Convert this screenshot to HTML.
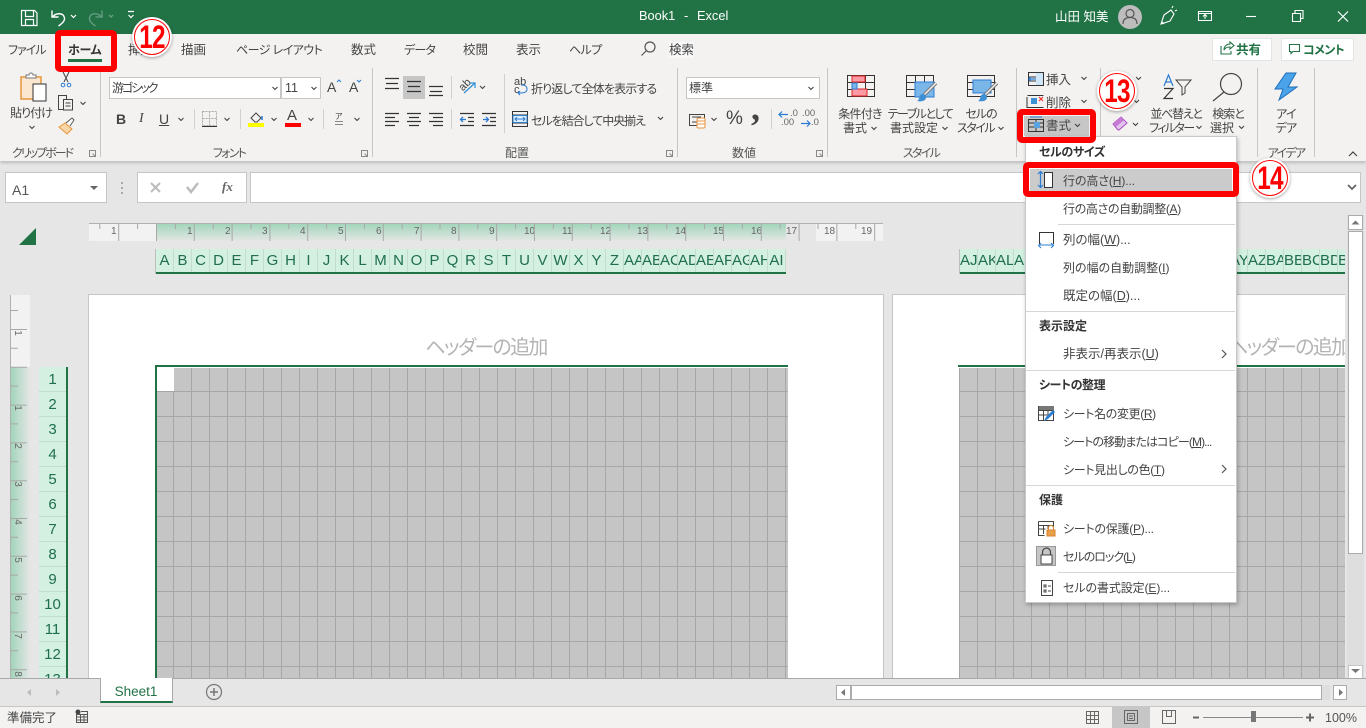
<!DOCTYPE html>
<html lang="ja"><head><meta charset="utf-8"><title>Book1 - Excel</title>
<style>
*{box-sizing:border-box}
html,body{margin:0;padding:0;width:1366px;height:728px;overflow:hidden;background:#e6e6e6}
body{position:relative;font-family:"Liberation Sans","Noto Sans CJK JP",sans-serif;font-size:12.5px;color:#444;font-feature-settings:"palt"}
.b{position:absolute}
.t{position:absolute;white-space:nowrap;line-height:16px;height:16px}
.c{transform:translateX(-50%)}
.w{color:#fff}
.bd{font-weight:700;color:#333}
.m{color:#444}
.s{font-size:12px}
.cols{position:absolute;display:flex;top:249px;height:25px;border-bottom:2px solid #217346;background:#d3f0e0;color:#1f6e4f;font-size:15px;line-height:24px;overflow:hidden}
.cols span{flex:0 0 18px;width:18px;overflow:hidden;white-space:nowrap;text-align:center;border-right:1px solid #c3dccf}
.rows{position:absolute;left:39px;top:367px;width:29px;border-right:2px solid #217346;background:#d3f0e0;color:#1f6e4f;font-size:15px;text-align:center}
.rows div{height:25px;line-height:25px;border-bottom:1px solid #c3dccf}
.grid{position:absolute;background-color:#c5c5c5;background-image:linear-gradient(90deg,#a6a6a6 1px,transparent 1px),linear-gradient(#a6a6a6 1px,transparent 1px);background-size:18px 25px}
.rl{position:absolute;font-size:10px;color:#666;line-height:12px;top:226px}
.rv{position:absolute;font-size:10px;color:#666;line-height:12px;left:12px;width:10px;text-align:center;transform:rotate(90deg)}
.sep{position:absolute;background:#d6d6d6;height:1px}
.circ{position:absolute;width:40px;height:40px;border-radius:50%;background:#fff;box-shadow:0 1px 3px rgba(0,0,0,.35)}
.circ i{position:absolute;left:2px;top:2px;width:36px;height:36px;border-radius:50%;border:1.5px solid #f00}
.circ b{position:absolute;left:0;top:0;width:40px;height:40px;text-align:center;line-height:40px;font-size:32px;color:#f00;font-family:"Liberation Sans",sans-serif;letter-spacing:-1px;transform:scaleX(.76);font-style:normal}
.red{position:absolute;border:6px solid #f00;border-radius:5px}
.lbl{color:#555}
</style></head><body>

<!-- title bar -->
<div class="b" style="left:0;top:0;width:1366px;height:34px;background:#217346"></div>
<div class="t w" style="left:639px;top:8px;font-size:12.8px">Book1</div>
<div class="t w" style="left:684px;top:8px;font-size:12.8px">-</div>
<div class="t w" style="left:697px;top:8px;font-size:12.8px">Excel</div>
<div class="t w" style="left:1055px;top:9px;font-size:12.5px">山田 知美</div>

<!-- ribbon -->
<div class="b" style="left:0;top:34px;width:1366px;height:127px;background:#f3f2f1;box-shadow:0 2px 3px rgba(0,0,0,.18)"></div>
<div class="t s" style="left:8px;top:42px;letter-spacing:-1px">ファイル</div>
<div class="t" style="left:128px;top:42px">挿入</div>
<div class="t" style="left:181px;top:42px">描画</div>
<div class="t s" style="left:236px;top:42px;letter-spacing:-.55px">ページ レイアウト</div>
<div class="t" style="left:351px;top:42px">数式</div>
<div class="t s" style="left:404px;top:42px;letter-spacing:-.8px">データ</div>
<div class="t" style="left:463px;top:42px">校閲</div>
<div class="t" style="left:516px;top:42px">表示</div>
<div class="t s" style="left:569px;top:42px;letter-spacing:-.6px">ヘルプ</div>
<div class="t" style="left:669px;top:42px;background:#f8f8f8">検索</div>

<div class="b" style="left:1212px;top:38px;width:60px;height:23px;background:#fff;border:1px solid #e4e4e4"></div>
<div class="t" style="left:1236px;top:42px;color:#217346;font-weight:700">共有</div>
<div class="b" style="left:1281px;top:38px;width:73px;height:23px;background:#fff;border:1px solid #e4e4e4"></div>
<div class="t s" style="left:1303px;top:42px;color:#217346;font-weight:700;letter-spacing:-.6px">コメント</div>

<!-- ribbon controls -->
<div class="b" style="left:109px;top:77px;width:172px;height:22px;background:#fff;border:1px solid #c6c6c6"></div>
<div class="t s" style="left:112px;top:80px;letter-spacing:-2px">游ゴシック</div>
<div class="b" style="left:281px;top:77px;width:40px;height:22px;background:#fff;border:1px solid #c6c6c6"></div>
<div class="t" style="left:285px;top:80px;font-size:12.5px">11</div>
<div class="b" style="left:686px;top:77px;width:134px;height:22px;background:#fff;border:1px solid #c6c6c6"></div>
<div class="t s" style="left:689px;top:80px">標準</div>
<div class="b" style="left:403px;top:76px;width:22px;height:23px;background:#c6c6c6"></div>

<div class="t s c" style="left:31px;top:105px;letter-spacing:-1px">貼り付け</div>
<div class="t" style="left:327px;top:79px;font-size:14px">A</div>
<div class="t" style="left:349px;top:79px;font-size:14px">A</div>
<div class="t" style="left:116px;top:111px;font-size:14px;font-weight:700">B</div>
<div class="t" style="left:139px;top:111px;font-size:14px;font-style:italic;font-family:'Liberation Serif',serif">I</div>
<div class="t" style="left:159px;top:111px;font-size:14px"><u>U</u></div>
<div class="t" style="left:287px;top:108px;font-size:15px">A</div>
<div class="t" style="left:335px;top:109px;font-size:8px">ア</div>

<div class="t s" style="left:531px;top:81px;letter-spacing:-.85px">折り返して全体を表示する</div>
<div class="t s" style="left:531px;top:113px;letter-spacing:-1.05px">セルを結合して中央揃え</div>
<div class="t" style="left:514px;top:74px;font-size:11px">ab</div>
<div class="t" style="left:514px;top:82px;font-size:11px">c</div>
<div class="t" style="left:459px;top:77px;font-size:11px;transform:rotate(-45deg)">ab</div>
<div class="t" style="left:726px;top:111px;font-size:19px;color:#444">%</div>
<div class="t" style="left:751px;top:100px;font-size:36px;font-weight:700;color:#444;font-family:'Liberation Serif',serif">,</div>
<div class="t" style="left:790px;top:106px;font-size:9.5px;color:#666">.0</div>
<div class="t" style="left:781px;top:115px;font-size:9.5px;color:#666">.00</div>
<div class="t" style="left:802px;top:106px;font-size:9.5px;color:#666">.00</div>
<div class="t" style="left:811px;top:115px;font-size:9.5px;color:#666">.0</div>

<div class="t s c" style="left:860px;top:106px;letter-spacing:-.75px">条件付き</div>
<div class="t s" style="left:843px;top:120px">書式</div>
<div class="t s c" style="left:920px;top:106px;letter-spacing:-1.5px">テーブルとして</div>
<div class="t s" style="left:890px;top:120px">書式設定</div>
<div class="t s c" style="left:981px;top:106px;letter-spacing:-1px">セルの</div>
<div class="t s" style="left:957px;top:120px;letter-spacing:-1.5px">スタイル</div>
<div class="t" style="left:1046px;top:72px">挿入</div>
<div class="t" style="left:1046px;top:95px">削除</div>
<div class="b" style="left:1024px;top:116px;width:65px;height:20px;background:#c6c6c6"></div>
<div class="t" style="left:1046px;top:118px">書式</div>
<div class="t s c" style="left:1176px;top:106px;letter-spacing:-1.3px">並べ替えと</div>
<div class="t s" style="left:1149px;top:120px;letter-spacing:-1.6px">フィルター</div>
<div class="t s c" style="left:1228px;top:106px;letter-spacing:-1px">検索と</div>
<div class="t s" style="left:1210px;top:120px">選択</div>
<div class="t s c" style="left:1286px;top:106px;letter-spacing:-.8px">アイ</div>
<div class="t s c" style="left:1286px;top:120px;letter-spacing:-.8px">デア</div>

<div class="t lbl c s" style="left:42px;top:145px;letter-spacing:-2px">クリップボード</div>
<div class="t lbl c s" style="left:229px;top:145px;letter-spacing:-1.7px">フォント</div>
<div class="t lbl c s" style="left:517px;top:145px">配置</div>
<div class="t lbl c s" style="left:744px;top:145px">数値</div>
<div class="t lbl c s" style="left:921px;top:145px;letter-spacing:-1.7px">スタイル</div>
<div class="t lbl c s" style="left:1286px;top:145px;letter-spacing:-1.7px">アイデア</div>

<!-- formula bar -->
<div class="b" style="left:5px;top:172px;width:102px;height:31px;background:#fff;border:1px solid #c6c6c6"></div>
<div class="t" style="left:12px;top:182px;font-size:14px;color:#555">A1</div>
<div class="b" style="left:137px;top:172px;width:110px;height:31px;background:#fff;border:1px solid #c6c6c6"></div>
<div class="t" style="left:222px;top:179px;font-size:13px;font-style:italic;font-weight:700;font-family:'Liberation Serif',serif;color:#666">fx</div>
<div class="b" style="left:250px;top:172px;width:1111px;height:31px;background:#fff;border:1px solid #c6c6c6"></div>

<!-- sheet rulers -->
<div class="b" style="left:89px;top:223px;width:67px;height:18px;background:#f2f2f2"></div>
<div class="b" style="left:156px;top:223px;width:630px;height:18px;background:linear-gradient(#9fd4b9,#e4e6e5)"></div>
<div class="b" style="left:816px;top:223px;width:67px;height:18px;background:#f2f2f2"></div>
<div class="b" style="left:89px;top:223px;width:794px;height:1px;background:#b0b0b0"></div>
<div class="b" style="left:10px;top:295px;width:20px;height:72px;background:#f2f2f2"></div>
<div class="b" style="left:10px;top:367px;width:20px;height:311px;background:linear-gradient(90deg,#9fd4b9,#e4e6e5)"></div>
<div class="b" style="left:10px;top:295px;width:1px;height:383px;background:#b0b0b0"></div>

<div class="rl" style="left:111px">1</div><div class="rl" style="left:187px">1</div><div class="rl" style="left:225px">2</div><div class="rl" style="left:262px">3</div><div class="rl" style="left:300px">4</div><div class="rl" style="left:338px">5</div><div class="rl" style="left:376px">6</div><div class="rl" style="left:414px">7</div><div class="rl" style="left:451px">8</div><div class="rl" style="left:489px">9</div><div class="rl" style="left:524px">10</div><div class="rl" style="left:562px">11</div><div class="rl" style="left:600px">12</div><div class="rl" style="left:637px">13</div><div class="rl" style="left:675px">14</div><div class="rl" style="left:713px">15</div><div class="rl" style="left:751px">16</div><div class="rl" style="left:786px">17</div><div class="rl" style="left:824px">18</div><div class="rl" style="left:861px">19</div>

<div class="rv" style="top:327px">1</div><div class="rv" style="top:402px">1</div><div class="rv" style="top:440px">2</div><div class="rv" style="top:478px">3</div><div class="rv" style="top:516px">4</div><div class="rv" style="top:554px">5</div><div class="rv" style="top:592px">6</div><div class="rv" style="top:630px">7</div><div class="rv" style="top:668px">8</div>

<svg class="b" style="left:0;top:0" width="1366" height="728" fill="none">
<path d="M19 245L36 245 36 228Z" fill="#217346"/>
<clipPath id="cr"><rect x="89" y="223" width="795" height="18"/></clipPath>
<line x1="80.400" y1="232" x2="884" y2="232" stroke="#a8a8a8" stroke-width="18" stroke-dasharray="1 36.800" clip-path="url(#cr)"/>
<line x1="99.300" y1="226.500" x2="884" y2="226.500" stroke="#a8a8a8" stroke-width="5" stroke-dasharray="1 36.800" clip-path="url(#cr)"/>
<line x1="18.500" y1="329" x2="18.500" y2="678" stroke="#a8a8a8" stroke-width="17" stroke-dasharray="1 36.800"/>
<line x1="14" y1="310" x2="14" y2="678" stroke="#a8a8a8" stroke-width="8" stroke-dasharray="1 36.800"/>
</svg>

<!-- pages -->
<div class="b" style="left:88px;top:294px;width:796px;height:390px;background:#fff;border:1px solid #c6c6c6"></div>
<div class="b" style="left:892px;top:294px;width:453px;height:390px;background:#fff;border:1px solid #c6c6c6;border-right:0"></div>
<div class="t c" style="left:486px;top:334px;height:28px;line-height:28px;font-size:20px;color:#b4b4b4;letter-spacing:-1.700px">ヘッダーの追加</div>
<div class="b" style="left:1200px;top:334px;width:145px;height:28px;overflow:hidden"><div class="t" style="left:28px;top:0;height:28px;line-height:28px;font-size:20px;color:#b4b4b4;letter-spacing:-1.700px">ヘッダーの追加</div></div>

<div class="b" style="left:155px;top:365px;width:633px;height:2px;background:#217346"></div>
<div class="b" style="left:155px;top:365px;width:2px;height:315px;background:#217346"></div>
<div class="grid" style="left:157px;top:368px;width:631px;height:312px;background-position:-2px 23px,0 23px"></div>
<div class="b" style="left:157px;top:368px;width:17px;height:23px;background:#fff"></div>
<div class="b" style="left:958px;top:365px;width:387px;height:2px;background:#217346"></div>
<div class="grid" style="left:959px;top:368px;width:386px;height:312px;background-position:0 23px,0 23px"></div>

<div class="b" style="left:155px;top:249px;width:1px;height:25px;background:#bdbdbd"></div>
<div class="b" style="left:959px;top:249px;width:1px;height:25px;background:#bdbdbd"></div>
<div class="cols" style="left:156px;width:630px"><span>A</span><span>B</span><span>C</span><span>D</span><span>E</span><span>F</span><span>G</span><span>H</span><span>I</span><span>J</span><span>K</span><span>L</span><span>M</span><span>N</span><span>O</span><span>P</span><span>Q</span><span>R</span><span>S</span><span>T</span><span>U</span><span>V</span><span>W</span><span>X</span><span>Y</span><span>Z</span><span>AA</span><span>AB</span><span>AC</span><span>AD</span><span>AE</span><span>AF</span><span>AG</span><span>AH</span><span>AI</span></div>
<div class="cols" style="left:960px;width:385px"><span>AJ</span><span>AK</span><span>AL</span><span>AM</span><span>AN</span><span>AO</span><span>AP</span><span>AQ</span><span>AR</span><span>AS</span><span>AT</span><span>AU</span><span>AV</span><span>AW</span><span>AX</span><span>AY</span><span>AZ</span><span>BA</span><span>BB</span><span>BC</span><span>BD</span><span>BE</span></div>
<div class="rows"><div>1</div><div>2</div><div>3</div><div>4</div><div>5</div><div>6</div><div>7</div><div>8</div><div>9</div><div>10</div><div>11</div><div>12</div><div>13</div></div>

<!-- vertical scrollbar -->
<div class="b" style="left:1347px;top:215px;width:17px;height:463px;background:#dedede"></div>
<div class="b" style="left:1348px;top:215px;width:15px;height:15px;background:#fff;border:1px solid #ababab"></div>
<div class="b" style="left:1348px;top:231px;width:15px;height:323px;background:#fff;border:1px solid #ababab"></div>
<div class="b" style="left:1348px;top:665px;width:15px;height:14px;background:#fff;border:1px solid #c6c6c6"></div>

<!-- tab bar + status bar -->
<div class="b" style="left:0;top:678px;width:1366px;height:28px;background:#e6e6e6;border-top:1px solid #a8a8a8"></div>
<div class="b" style="left:100px;top:678px;width:73px;height:25px;background:#fff;border-left:1px solid #a8a8a8;border-right:1px solid #a8a8a8;border-bottom:2px solid #217346"></div>
<div class="t c" style="left:136px;top:684px;color:#217346;font-size:13.500px">Sheet1</div>
<div class="b" style="left:836px;top:685px;width:15px;height:15px;background:#fff;border:1px solid #ababab"></div>
<div class="b" style="left:851px;top:685px;width:471px;height:15px;background:#fff;border:1px solid #ababab"></div>
<div class="b" style="left:1322px;top:685px;width:8px;height:15px;background:#dedede"></div>
<div class="b" style="left:1333px;top:685px;width:14px;height:15px;background:#fff;border:1px solid #ababab"></div>
<div class="b" style="left:0;top:706px;width:1366px;height:22px;background:#f3f2f1;border-top:1px solid #c6c6c6"></div>
<div class="t" style="left:7px;top:710px;font-size:12.500px">準備完了</div>
<div class="b" style="left:1112px;top:707px;width:38px;height:21px;background:#c6c6c6"></div>
<div class="t" style="left:1325px;top:710px;font-size:12.500px;color:#555">100%</div>

<!-- icons -->
<svg class="b" style="left:0;top:0" width="1366" height="728" fill="none" stroke-width="1">
<!-- title bar -->
<g stroke="#fff" stroke-width="1.200">
<path d="M21.500 10.500h13l2.500 2.500v12.500h-15.500zM25.500 10.500v6h8v-6M25.500 25.500v-6h8v6"/>
<path d="M52 10.500v6.500h6.500M52.500 17c3-4 11-5 12 1 .5 3-3 6-6 8" stroke-width="1.400"/>
<path d="M71 15l2.500 2.500 2.500-2.500M128 11.500h6M128.500 15l2.500 2.500 2.500-2.500"/>
</g>
<circle cx="1130" cy="17" r="12" fill="#bdbdbd"/>
<g stroke="#555" stroke-width="1.200"><circle cx="1130" cy="13.500" r="4"/><path d="M1123 24c0-5 3-6.500 7-6.500s7 1.500 7 6.500"/></g>
<g stroke="#6a9f84" stroke-width="1.300"><path d="M102 10.500v6.500h-6.500M101.500 17c-3-4-11-5-12 1-.5 3 3 6 6 8M109 15l2 2 2-2"/></g>
<g stroke="#fff" stroke-width="1.100">
<path d="M1161 24l3-9 7-5 3 4-4 7zM1164 24l-2-2M1172 8l1-2M1175 11l2-1"/>
<path d="M1198.500 11.500h13v9h-13zM1198.500 13.500h13M1205 19v-4M1203 16.500l2-2 2 2"/>
<path d="M1246 16.500h10"/>
<path d="M1292.500 13.500h8v8h-8zM1295 13v-2.500h8v8h-2.500"/>
<path d="M1338 11.500l10 10M1348 11.500l-10 10" stroke-width="1.200"/>
</g>
<!-- search + share + comment -->
<g stroke="#555" stroke-width="1.200"><circle cx="650" cy="47" r="5"/><path d="M646.500 50.500l-5 5"/></g>
<g stroke="#217346" stroke-width="1.100"><path d="M1221 46v8h10v-3M1224 50c0-4 3-6 6-6v-2l4 3.500-4 3.500v-2c-3 0-5 1-6 3z"/><path d="M1289.500 44.500h10v7h-6.500l-2 2v-2h-1.500z"/></g>

<!-- clipboard -->
<path d="M21 77h20v22h-20z" fill="#fbe6cf" stroke="#e8953c" stroke-width="1.500"/>
<path d="M26 77v-2h3a2 2 0 0 1 4 0h3v3h-10z" fill="#fff" stroke="#777"/>
<path d="M33 84h13v17h-13z" fill="#fff" stroke="#333"/>
<g stroke="#444"><path d="M63 72l5 10M69 72l-5 10"/><circle cx="63" cy="85" r="1.800" stroke="#2b7cd3"/><circle cx="69" cy="85" r="1.800" stroke="#2b7cd3"/>
<path d="M58.500 95.500h8v14h-8z"/><path d="M63.500 99.500h9v10.500h-9z" fill="#f3f2f1"/><path d="M65.500 103h5M65.500 106h5"/></g>
<path d="M59 127l8 7 5-5-7-6z" fill="#f8d6a8" stroke="#e8953c"/>
<path d="M66 123l6-5 2 2-4 6" fill="#fff" stroke="#555"/>
<!-- chevrons -->
<path d="M29.500 126l2.500 2.500 2.500-2.500M80.500 102l2.500 2.500 2.500-2.500M272.500 87l2.500 2.500 2.500-2.500M311.500 87l2.500 2.500 2.500-2.500M178.500 118l2.500 2.500 2.500-2.500M224.500 118l2.500 2.500 2.500-2.500M271.500 118l2.500 2.500 2.500-2.500M308.500 118l2.500 2.500 2.500-2.500M354.500 118l2.500 2.500 2.500-2.500M480 86l2.500 2.500 2.500-2.500M658 117l2.500 2.500 2.500-2.500M808.500 87l2.500 2.500 2.500-2.500M711.500 118l2.500 2.500 2.500-2.500M871.500 127l2.500 2.500 2.500-2.500M942.500 127l2.500 2.500 2.500-2.500M998.500 127l2.500 2.500 2.500-2.500M1081.500 77l2.500 2.500 2.500-2.500M1081.500 100l2.500 2.500 2.500-2.500M1075 124l2.500 2.500 2.500-2.500M1136 77l2.500 2.500 2.500-2.500M1134 100l2.500 2.500 2.500-2.500M1133 123l2.500 2.500 2.500-2.500M1196.500 126l2.500 2.500 2.500-2.500M1239 126l2.500 2.500 2.500-2.500" stroke="#444" stroke-width="1.100"/>
<path d="M337 82l2-2 2 2" stroke="#2b7cd3"/>
<path d="M357 80l2 2 2-2" stroke="#2b7cd3"/>
<!-- separators in groups -->
<path d="M100.500 68v89M372.500 68v89M677.500 68v89M827.500 68v89M1016.500 68v89M1100.500 68v89M1257.500 68v89M1314.500 68v89" stroke="#c6c6c6"/>
<path d="M194.500 109v20M240.500 109v20M323.500 109v20M451.500 76v23M451.500 109v20M504.500 74v59M771.500 109v20" stroke="#d0d0d0"/>
<!-- launchers -->
<path d="M89.500 150.500h6v6h-6zM92.500 153.500l3 3M361.500 150.500h6v6h-6zM364.500 153.500l3 3M666.500 150.500h6v6h-6zM669.500 153.500l3 3M816.500 150.500h6v6h-6zM819.500 153.500l3 3" stroke="#888"/>
<!-- font row -->
<path d="M202.500 111.500h14v14h-14zM209.500 111.500v14M202.500 118.500h14" stroke="#aaa" stroke-dasharray="2 1"/>
<path d="M202 126.500h15" stroke="#333"/>
<path d="M251 118l5-5 5 5-4 4h-2z" stroke="#444"/><path d="M262 116v4" stroke="#2b7cd3" stroke-width="1.500"/>
<rect x="248" y="123" width="16" height="4" fill="#ff0"/><rect x="285" y="123" width="16" height="4" fill="#f00"/>
<path d="M335 121.500h8M335 124.500h8" stroke="#888"/>
<!-- alignment -->
<path d="M385 78.500h14M386 83.500h12M385 88.500h14M407 81.500h14M408 86.500h12M407 91.500h14M429 86.500h14M430 91.500h12M429 95.500h14" stroke="#333" stroke-width="1.200"/>
<path d="M385 113.500h14M385 117.500h10M385 121.500h14M385 125.500h10M407 113.500h14M409 117.500h10M407 121.500h14M409 125.500h10M429 113.500h14M433 117.500h10M429 121.500h14M433 125.500h10" stroke="#333" stroke-width="1.200"/>
<path d="M460 113.500h14M468 117.500h6M468 121.500h6M460 125.500h14M482 113.500h14M490 117.500h6M490 121.500h6M482 125.500h14" stroke="#333" stroke-width="1.200"/>
<path d="M466 119.500h-5m2-2.500l-2.500 2.500 2.500 2.500M483 119.500h5m-2-2.500l2.500 2.500-2.500 2.500" stroke="#2b7cd3" stroke-width="1.300"/>
<path d="M464 93l11-10m-5 0h5v5" stroke="#2b8fd8" stroke-width="1.200"/>
<path d="M518 93c5 0 9 0 9-4s-4-4-6-4M518 93l2-2M518 93l2 2" stroke="#2b7cd3"/>
<path d="M512.500 111.500h15v15h-15zM512.500 115h15M512.500 123h15" stroke="#333"/>
<path d="M513 115.500h14v7h-14z" fill="#e3f0fb" stroke="#2b7cd3"/>
<path d="M515 119h10m-8-2l-2 2 2 2m6-4l2 2-2 2" stroke="#2b7cd3"/>
<!-- number -->
<path d="M689.500 114.500h15v11h-15zM692 117h9M692 122h9" stroke="#444"/>
<rect x="697" y="118" width="8" height="10" rx="1.500" fill="#fff" stroke="#e8953c"/>
<path d="M697 121h8M697 124h8" stroke="#e8953c"/>
<path d="M788 114.500h-9m3-3l-3 3 3 3M801 123.500h9m-3-3l3 3-3 3" stroke="#2b7cd3" stroke-width="1.200"/>
<!-- styles -->
<path d="M847.500 75.500h27v21h-27zM847.500 82.500h27M847.500 89.500h27M856.500 75.500v21M865.500 75.500v21" stroke="#333"/>
<rect x="852" y="76" width="13" height="6" fill="#fb9aa4" stroke="#d22"/>
<rect x="852" y="89" width="15" height="7" fill="#fb9aa4" stroke="#d22"/>
<rect x="852" y="83" width="5" height="6" fill="#7ab6e8" stroke="#2b7cd3"/>
<path d="M906.500 75.500h27v21h-27zM906.500 82.500h27M906.500 89.500h27M915.500 75.500v21M924.500 75.500v21" stroke="#333"/>
<rect x="915" y="82" width="19" height="15" fill="#7ab6e8" stroke="#2b7cd3"/>
<path d="M967.500 75.500h27v21h-27zM967.500 82.500h27M967.500 89.500h27" stroke="#333"/>
<rect x="973" y="80" width="18" height="13" fill="#7ab6e8" stroke="#2b7cd3"/>
<path d="M923 96l13-13M984 96l13-13" stroke="#777" stroke-width="3.500"/>
<path d="M923 96l13-13M984 96l13-13" stroke="#f3f2f1" stroke-width="1.500"/>
<path d="M917 101c4 1 9 0 9-3.500s-3-4-5-3c-2 1-1 5-4 6.500zM978 101c4 1 9 0 9-3.500s-3-4-5-3c-2 1-1 5-4 6.500z" fill="#3f8fd4"/>
<!-- cells -->
<path d="M1028.500 72.500h15v13h-15zM1028.500 77h15M1028.500 81h15M1037 72.500v13" stroke="#333"/>
<path d="M1036 73h7v12h-7z" fill="#cfe6f8"/><path d="M1036 79h-7m2-2l-2 2 2 2" stroke="#2b7cd3" stroke-width="1.200"/>
<path d="M1027 97v11M1027.500 95.500h16M1027.500 107.500h16" stroke="#333"/>
<rect x="1031" y="98" width="6" height="6" fill="#3f8fd4"/><path d="M1039 97l4 4m0-4l-4 4" stroke="#e33" stroke-width="1.200"/>
<path d="M1028.500 119.500h15v12h-15zM1028.500 123h15M1028.500 127h15M1036 119.500v12" stroke="#333"/>
<rect x="1034" y="122" width="6" height="6" fill="#5aa3e0"/>
<path d="M1030 117h12" stroke="#2b7cd3"/>
<path d="M1113 124l8-7 6 6-8 7h-1z" fill="#e4c3ec" stroke="#a64ec0"/>
<path d="M1113 124l8-7 3 3-8 7z" fill="#c77bd4"/>
<path d="M1164 86l4.500-11 4.500 11M1166 82h5" stroke="#2b7cd3" stroke-width="1.200"/>
<path d="M1164 88.500h9l-9 10h9" stroke="#333" stroke-width="1.200"/>
<path d="M1176 80h15l-6 7v6l-3 2v-8z" stroke="#444"/>
<circle cx="1231" cy="84" r="10.500" stroke="#444" stroke-width="1.200"/>
<path d="M1224 92l-11 9" stroke="#444" stroke-width="1.200"/>
<path d="M1286 73h10l-8 14h9l-18 13 4-11h-8z" fill="#4ba3ea" stroke="#1c6fb8"/>
<path d="M1349 156l4-4 4 4" stroke="#444" stroke-width="1.200"/>
<!-- formula bar -->
<path d="M90 186l4 4 4-4z" fill="#666"/>
<path d="M122 182v2M122 187v2M122 192v2" stroke="#aaa" stroke-width="2"/>
<path d="M151 183l9 9m0-9l-9 9" stroke="#bbb" stroke-width="2"/>
<path d="M187 187l4 5 7-9" stroke="#bbb" stroke-width="2.500"/>
<path d="M1348 185l4 4 4-4" stroke="#666" stroke-width="1.800"/>
<!-- scroll arrows -->
<path d="M1351.500 224.500l4-4 4 4z" fill="#777"/>
<path d="M1351 669h9l-4.500 4z" fill="#777"/>
<path d="M845 689v7l-4-3.500z" fill="#777"/>
<path d="M1339 689v7l4-3.500z" fill="#777"/>
<path d="M31 689v7l-4-3.500zM56 689v7l4-3.500z" fill="#bbb"/>
<circle cx="214" cy="692" r="7.500" stroke="#777" stroke-width="1.200"/>
<path d="M214 688v8M210 692h8" stroke="#777" stroke-width="1.500"/>
<!-- status -->
<circle cx="78" cy="712" r="2.500" fill="#444"/>
<path d="M76.500 714.500h11v8h-11zM76.500 717h11M76.500 720h11M81 711.500h6.500v3M80.500 715v7M84 715v7" stroke="#555"/>
<path d="M1086.500 711.500h12v12h-12zM1086.500 715.500h12M1086.500 719.500h12M1090.500 711.500v12M1094.500 711.500v12" stroke="#666"/>
<path d="M1124.500 710.500h13v13h-13zM1127.500 713.500h7v7h-7zM1129 716h4M1129 718.500h4" stroke="#666"/>
<path d="M1162.500 710.500h13v13h-13zM1166.500 710.500v6h5v-6" stroke="#666"/>
<path d="M1203 717.500h100" stroke="#888"/>
<path d="M1193 717.500h6M1306 717.500h8M1310 713.500v8" stroke="#666" stroke-width="2"/>
<rect x="1251" y="711" width="5" height="11" fill="#777"/>
</svg>

<!-- dropdown menu -->
<div class="b" style="left:1025px;top:136px;width:212px;height:467px;background:#fff;border:1px solid #c8c8c8;box-shadow:1px 2px 4px rgba(0,0,0,.25)"></div>
<div class="b" style="left:1030px;top:169px;width:202px;height:22px;background:#cbcbcb"></div>
<div class="t bd s" style="left:1039px;top:144px;letter-spacing:-.4px">セルのサイズ</div>
<div class="t m s" style="left:1063px;top:173px;letter-spacing:-.1px">行の高さ(<u>H</u>)...</div>
<div class="t m s" style="left:1063px;top:201px;letter-spacing:-.33px">行の高さの自動調整(<u>A</u>)</div>
<div class="sep" style="left:1058px;top:224px;width:177px"></div>
<div class="t m" style="left:1063px;top:232px">列の幅(<u>W</u>)...</div>
<div class="t m s" style="left:1063px;top:260px">列の幅の自動調整(<u>I</u>)</div>
<div class="t m" style="left:1063px;top:288px">既定の幅(<u>D</u>)...</div>
<div class="sep" style="left:1026px;top:311px;width:209px"></div>
<div class="t bd s" style="left:1039px;top:318px">表示設定</div>
<div class="t m" style="left:1063px;top:346px">非表示/再表示(<u>U</u>)</div>
<div class="sep" style="left:1026px;top:370px;width:209px"></div>
<div class="t bd s" style="left:1039px;top:377px;letter-spacing:-.4px">シートの整理</div>
<div class="t m s" style="left:1063px;top:406px;letter-spacing:-.36px">シート名の変更(<u>R</u>)</div>
<div class="t m s" style="left:1063px;top:434px;letter-spacing:-.9px">シートの移動またはコピー(<u>M</u>)...</div>
<div class="t m s" style="left:1063px;top:462px;letter-spacing:-.33px">シート見出しの色(<u>T</u>)</div>
<div class="sep" style="left:1026px;top:485px;width:209px"></div>
<div class="t bd s" style="left:1039px;top:492px">保護</div>
<div class="t m s" style="left:1063px;top:521px;letter-spacing:-.25px">シートの保護(<u>P</u>)...</div>
<div class="b" style="left:1036px;top:546px;width:20px;height:20px;background:#c6c6c6;border:1px solid #999"></div>
<div class="t m s" style="left:1063px;top:549px;letter-spacing:-1px">セルのロック(<u>L</u>)</div>
<div class="sep" style="left:1058px;top:572px;width:177px"></div>
<div class="t m s" style="left:1063px;top:580px;letter-spacing:-.1px">セルの書式設定(<u>E</u>)...</div>

<svg class="b" style="left:0;top:0" width="1366" height="728" fill="none">
<path d="M1044.500 172.500h8v15h-8z" fill="#fff" stroke="#333"/>
<path d="M1040.500 172v15m-2.500-13l2.500-2.500 2.500 2.500m-5 11l2.500 2.500 2.500-2.500" stroke="#2b7cd3" stroke-width="1.200"/>
<path d="M1039.500 244v-11.500h14v11.500" stroke="#333"/>
<path d="M1039 245h15m-13-2l-2.500 2.500 2.500 2.500m10-5l2.500 2.500-2.500 2.500" stroke="#2b7cd3"/>
<path d="M1038.500 406.500h15v14h-15zM1038.500 410.500h15M1038.500 415h9M1043.500 411v9M1048 411v4" stroke="#444"/>
<rect x="1039" y="406" width="15" height="4" fill="#777"/>
<path d="M1044 421l2-4 7-7 2 2-7 7z" fill="#2b7cd3"/>
<path d="M1038.500 521.500h15v5M1038.500 521.500v14h6M1038.500 525.500h15M1038.500 529h7M1043.500 526v8M1048 526v3" stroke="#444"/>
<rect x="1047" y="530" width="8" height="6" fill="#e8a04c" stroke="#d9822b"/>
<path d="M1048.500 530v-2a2.500 2.500 0 0 1 5 0v2" stroke="#d9822b"/>
<rect x="1041" y="555" width="11" height="9" fill="#fff" stroke="#444"/>
<path d="M1042.500 555v-3a4 4 0 0 1 8 0v3" stroke="#444" stroke-width="1.200"/>
<path d="M1041.500 580.500h11v15h-11zM1044 585h2v2h-2zM1044 590h2v2h-2zM1048 586h3M1048 591h3" stroke="#444"/>
<path d="M1222 350l4 4-4 4M1222 465l4 4-4 4" stroke="#555" stroke-width="1.200"/>
</svg>

<!-- annotations -->
<div class="red" style="left:55px;top:30px;width:62px;height:42px"></div>
<div class="t bd s" style="left:68px;top:42px;letter-spacing:-.3px">ホーム</div>
<div class="b" style="left:68px;top:59px;width:34px;height:3px;background:#217346"></div>
<div class="red" style="left:1017px;top:109px;width:79px;height:34px"></div>
<div class="red" style="left:1023px;top:162px;width:216px;height:35px"></div>
<div class="circ" style="left:132px;top:17px"><i></i><b>12</b></div>
<div class="circ" style="left:1097px;top:71px"><i></i><b>13</b></div>
<div class="circ" style="left:1250px;top:158px"><i></i><b>14</b></div>
</body></html>
